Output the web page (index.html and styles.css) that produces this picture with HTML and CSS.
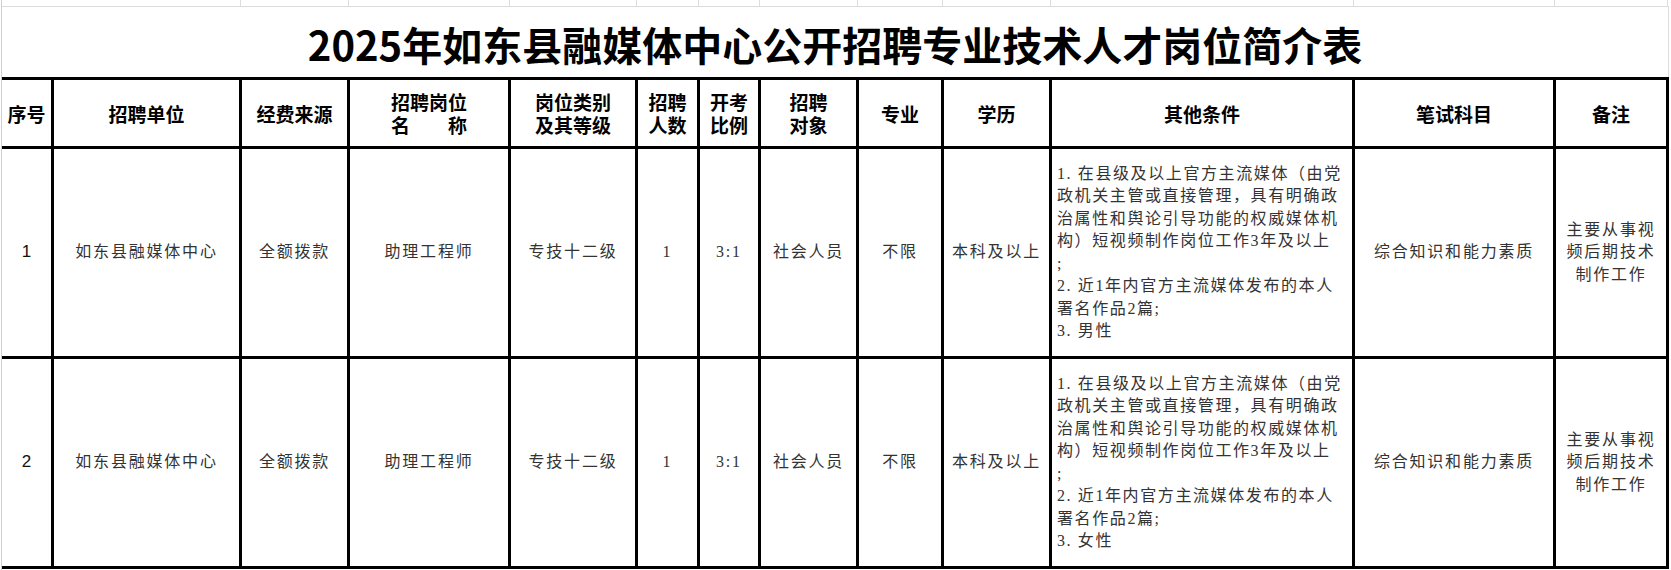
FILE: index.html
```html
<!DOCTYPE html>
<html lang="zh-CN">
<head>
<meta charset="utf-8">
<title>2025年如东县融媒体中心公开招聘专业技术人才岗位简介表</title>
<link rel="stylesheet" href="styles.css">
</head>
<body>
<div class="sheet">
  <div class="strip">
    <span></span><span></span><span></span><span></span><span></span><span></span>
    <span></span><span></span><span></span><span></span><span></span><span></span>
  </div>
  <div class="title">2025年如东县融媒体中心公开招聘专业技术人才岗位简介表</div>
  <table class="jobs">
    <colgroup>
      <col class="c1"><col class="c2"><col class="c3"><col class="c4"><col class="c5">
      <col class="c6"><col class="c7"><col class="c8"><col class="c9"><col class="c10">
      <col class="c11"><col class="c12"><col class="c13">
    </colgroup>
    <thead>
      <tr>
        <th>序号</th>
        <th>招聘单位</th>
        <th>经费来源</th>
        <th><span class="hl">招聘岗位</span><span class="hl">名　　称</span></th>
        <th><span class="hl">岗位类别</span><span class="hl">及其等级</span></th>
        <th><span class="hl">招聘</span><span class="hl">人数</span></th>
        <th><span class="hl">开考</span><span class="hl">比例</span></th>
        <th><span class="hl">招聘</span><span class="hl">对象</span></th>
        <th>专业</th>
        <th>学历</th>
        <th>其他条件</th>
        <th>笔试科目</th>
        <th>备注</th>
      </tr>
    </thead>
    <tbody>
      <tr>
        <td class="num">1</td>
        <td>如东县融媒体中心</td>
        <td>全额拨款</td>
        <td>助理工程师</td>
        <td>专技十二级</td>
        <td>1</td>
        <td>3:1</td>
        <td>社会人员</td>
        <td>不限</td>
        <td>本科及以上</td>
        <td class="cond">1. 在县级及以上官方主流媒体（由党<br>政机关主管或直接管理，具有明确政<br>治属性和舆论引导功能的权威媒体机<br>构）短视频制作岗位工作3年及以上<br>;<br>2. 近1年内官方主流媒体发布的本人<br>署名作品2篇;<br>3. 男性</td>
        <td>综合知识和能力素质</td>
        <td class="note">主要从事视<br>频后期技术<br>制作工作</td>
      </tr>
      <tr>
        <td class="num">2</td>
        <td>如东县融媒体中心</td>
        <td>全额拨款</td>
        <td>助理工程师</td>
        <td>专技十二级</td>
        <td>1</td>
        <td>3:1</td>
        <td>社会人员</td>
        <td>不限</td>
        <td>本科及以上</td>
        <td class="cond">1. 在县级及以上官方主流媒体（由党<br>政机关主管或直接管理，具有明确政<br>治属性和舆论引导功能的权威媒体机<br>构）短视频制作岗位工作3年及以上<br>;<br>2. 近1年内官方主流媒体发布的本人<br>署名作品2篇;<br>3. 女性</td>
        <td>综合知识和能力素质</td>
        <td class="note">主要从事视<br>频后期技术<br>制作工作</td>
      </tr>
    </tbody>
  </table>
</div>
</body>
</html>
```

FILE: styles.css
```css
html, body {
  margin: 0;
  padding: 0;
  background: #ffffff;
}

.sheet {
  width: 1668px;
  margin-left: 1px;
  border-left: 1px solid #cfcfcf;
  box-sizing: border-box;
  height: 570px;
}

.strip {
  display: grid;
  grid-template-columns: 239px 108px 161px 127px 62px 61px 98px 85px 108px 303px 201px 113px;
  height: 7px;
  border-bottom: 1px solid #dcdcdc;
  box-sizing: border-box;
}

.strip span {
  border-right: 1px solid #dcdcdc;
}

.title {
  height: 70px;
  display: flex;
  align-items: center;
  justify-content: center;
  padding-top: 4px;
  box-sizing: border-box;
  border-right: 1px solid #dcdcdc;
  font-family: "Noto Sans CJK SC", sans-serif;
  font-weight: 700;
  font-size: 40px;
  color: #000;
  line-height: 1;
}

.jobs {
  border-collapse: separate;
  border-spacing: 0;
  table-layout: fixed;
  width: 1667px;
}

.c1 { width: 52px; }
.c2 { width: 188px; }
.c3 { width: 108px; }
.c4 { width: 161px; }
.c5 { width: 127px; }
.c6 { width: 62px; }
.c7 { width: 61px; }
.c8 { width: 98px; }
.c9 { width: 85px; }
.c10 { width: 108px; }
.c11 { width: 303px; }
.c12 { width: 201px; }
.c13 { width: 113px; }

.jobs th,
.jobs td {
  border-right: 3px solid #000;
  border-bottom: 3px solid #000;
  padding: 0;
  text-align: center;
  vertical-align: middle;
  overflow: hidden;
}

.jobs th {
  border-top: 3px solid #000;
  height: 66px;
  font-family: "Noto Sans CJK SC", sans-serif;
  font-weight: 700;
  font-size: 19px;
  line-height: 23px;
  color: #000;
}

.jobs th .hl {
  display: block;
  height: 23px;
  line-height: 23px;
}

.jobs td {
  height: 207px;
  font-family: "Liberation Serif", "Noto Sans CJK SC", serif;
  font-weight: 400;
  font-size: 16px;
  letter-spacing: 1.8px;
  line-height: 22.5px;
  color: #333;
  white-space: nowrap;
}

.jobs td.num {
  font-family: "Liberation Sans", "Noto Sans CJK SC", sans-serif;
  font-size: 17px;
  letter-spacing: 0;
  color: #111;
}

.jobs td.cond {
  text-align: left;
  padding-left: 5px;
  letter-spacing: 1.6px;
}

.jobs td.note {
  line-height: 22.5px;
}
```
